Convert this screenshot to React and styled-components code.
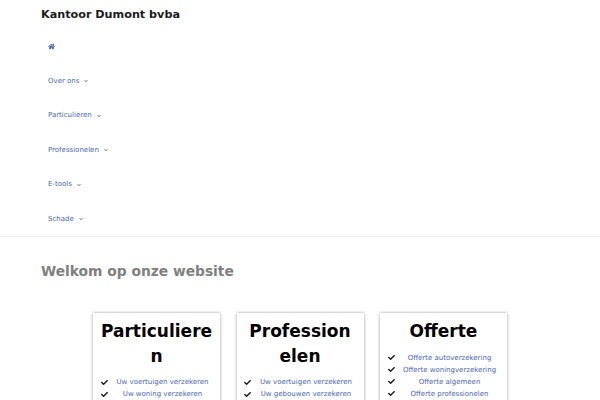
import React from "react";
import styled, { createGlobalStyle } from "styled-components";
import { FaHome, FaCheck, FaChevronDown } from "react-icons/fa";

const GlobalStyle = createGlobalStyle`
  html, body {
    margin: 0;
    padding: 0;
    height: 400px;
    overflow: hidden;
    background: #fff;
    font-family: "DejaVu Sans", sans-serif;
  }
`;

const navItems = ["Over ons", "Particulieren", "Professionelen", "E-tools", "Schade"];

const cards = [
  {
    title: "Particulieren",
    links: ["Uw voertuigen verzekeren", "Uw woning verzekeren", "Uw gezin verzekeren"],
  },
  {
    title: "Professionelen",
    links: ["Uw voertuigen verzekeren", "Uw gebouwen verzekeren", "Uw bedrijf verzekeren"],
  },
  {
    title: "Offerte",
    links: ["Offerte autoverzekering", "Offerte woningverzekering", "Offerte algemeen", "Offerte professionelen"],
  },
];

export default function App() {
  return (
    <Page>
      <GlobalStyle />
      <Header>
        <Brand>Kantoor Dumont bvba</Brand>
        <Nav>
          <NavItem>
            <FaHome size={7} />
          </NavItem>
          {navItems.map((item) => (
            <NavItem key={item}>
              {item}
              <Caret>
                <FaChevronDown size={4} />
              </Caret>
            </NavItem>
          ))}
        </Nav>
      </Header>
      <Main>
        <Welcome>Welkom op onze website</Welcome>
        <Cards>
          {cards.map((card) => (
            <Card key={card.title}>
              <CardTitle>{card.title}</CardTitle>
              <LinkList>
                {card.links.map((link) => (
                  <LinkRow key={link}>
                    <FaCheck size={7} color="#1a1a1a" />
                    <CardLink>{link}</CardLink>
                  </LinkRow>
                ))}
              </LinkList>
            </Card>
          ))}
        </Cards>
      </Main>
    </Page>
  );
}

const Page = styled.div`
  width: 600px;
  height: 400px;
  overflow: hidden;
`;

const Header = styled.header`
  padding: 7px 41px 0;
  height: 229px;
  border-bottom: 1px solid #ececec;
`;

const Brand = styled.div`
  font-size: 11.2px;
  font-weight: 700;
  line-height: 15px;
  color: #1a1a1a;
`;

const Nav = styled.nav`
  display: flex;
  flex-direction: column;
  margin-top: 7px;
`;

const NavItem = styled.a`
  display: flex;
  align-items: center;
  height: 34.5px;
  padding-left: 7px;
  font-size: 7px;
  color: #4766b5;
`;

const Caret = styled.span`
  display: inline-flex;
  margin-left: 5px;
  margin-top: 1px;
  color: #666;
`;

const Main = styled.main`
  padding: 25px 41px 0;
`;

const Welcome = styled.h1`
  margin: 0;
  font-size: 13.8px;
  line-height: 18px;
  font-weight: 700;
  color: #808080;
`;

const Cards = styled.div`
  display: flex;
  justify-content: center;
  gap: 16.5px;
  margin: 33px -41px 0;
`;

const Card = styled.section`
  box-sizing: border-box;
  width: 127px;
  padding: 6px 7.5px;
  background: #fff;
  box-shadow: 0 0 3px rgba(0, 0, 0, 0.4);
  text-align: center;
`;

const CardTitle = styled.h2`
  margin: 0 0 8.3px;
  font-size: 17px;
  line-height: 24.5px;
  font-weight: 700;
  color: #000;
  overflow-wrap: anywhere;
`;

const LinkList = styled.ul`
  list-style: none;
  margin: 0;
  padding: 0;
`;

const LinkRow = styled.li`
  display: grid;
  grid-template-columns: 12px 1fr;
  align-items: center;
  height: 12px;
`;

const CardLink = styled.a`
  font-size: 7px;
  color: #4766b5;
  white-space: nowrap;
`;
